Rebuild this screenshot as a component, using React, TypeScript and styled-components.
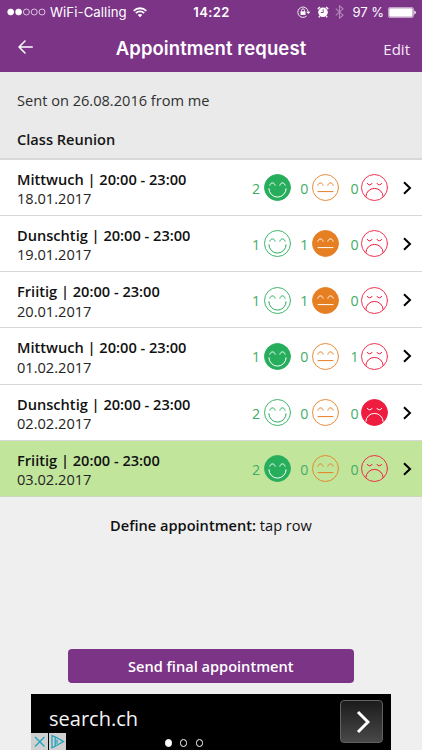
import React from "react";
import styled, { createGlobalStyle } from "styled-components";

const GlobalStyle = createGlobalStyle`
  * { box-sizing: border-box; }
  body { margin: 0; background: #efefef; }
`;

const purple = "#7c3487";
const green = "#27ae5c";
const orange = "#e67e22";
const red = "#ee1c3e";

const Screen = styled.div`
  width: 422px;
  height: 750px;
  display: flex;
  flex-direction: column;
  overflow: hidden;
  background: #efefef;
  color: #111;
  font: 15px/20px "Open Sans", "Noto Sans", sans-serif;
`;

const Header = styled.header`
  height: 72px;
  flex: none;
  background: ${purple};
  color: #fff;
  font-family: Inter, sans-serif;
`;

const StatusBar = styled.div`
  height: 24px;
  display: grid;
  grid-template-columns: 1fr auto 1fr;
  align-items: center;
  padding: 0 6px 0 7px;
  font-size: 13.2px;
  line-height: 24px;
`;

const StatusGroup = styled.div<{ $end?: boolean }>`
  display: flex;
  align-items: center;
  justify-content: ${(p) => (p.$end ? "flex-end" : "flex-start")};
  white-space: nowrap;
  svg { flex: none; }
`;

const Carrier = styled.span`
  margin: 0 6px 0 4px;
  letter-spacing: 0.08px;
`;

const Clock = styled.span`
  font-weight: 600;
  font-size: 13px;
  letter-spacing: 0.4px;
`;

const Percent = styled.span`
  margin: 0 4px 0 8px;
  font-size: 13px;
`;

const NavBar = styled.div`
  height: 48px;
  display: grid;
  grid-template-columns: 57px 1fr 63px;
  align-items: center;
  padding: 0 12px 2px 18px;
`;

const BackButton = styled.button`
  display: flex;
  padding: 0;
  border: 0;
  background: none;
`;

const Title = styled.h1`
  margin: 0;
  padding-top: 1px;
  text-align: center;
  font-size: 18.5px;
  line-height: 24px;
  font-weight: 600;
  letter-spacing: 0.08px;
  white-space: nowrap;
`;

const EditButton = styled.button`
  padding: 3px 0 0;
  border: 0;
  background: none;
  color: #f8e9fa;
  text-align: right;
  font: 15px/20px "Open Sans", sans-serif;
`;

const Info = styled.section`
  height: 87.6px;
  flex: none;
  padding: 18px 17px 0;
  background: #eaeaea;
  border-bottom: 2px solid #d9d9d9;
  font-size: 14.6px;
  color: #303030;
`;

const Subject = styled.h2`
  margin: 19px 0 0;
  font-size: 14.6px;
  line-height: 20px;
  font-weight: 600;
  color: #151515;
`;

const List = styled.div`
  flex: none;
`;

const Row = styled.div<{ $selected?: boolean }>`
  height: 56.25px;
  display: flex;
  align-items: center;
  padding: 1px 10px 0 17px;
  background: ${(p) => (p.$selected ? "#c2e59c" : "#fff")};
  border-bottom: 1px solid ${(p) => (p.$selected ? "#cbd8bd" : "#d8d8d8")};
`;

const When = styled.div`
  flex: 1;
  padding-top: 3px;
  font-size: 14.6px;
  line-height: 19.5px;
  white-space: nowrap;
`;

const Slot = styled.div`
  font-weight: 600;
`;

const DateText = styled.div`
  color: #242424;
`;

const Votes = styled.div`
  display: grid;
  grid-template-columns: 40px 47.5px 49.5px;
  margin-right: 15px;
`;

const Vote = styled.div`
  display: flex;
  align-items: center;
  justify-content: flex-end;
  svg { flex: none; }
`;

const Count = styled.span<{ $gap: number }>`
  margin-right: ${(p) => p.$gap}px;
  padding-top: 2px;
  color: #43ad67;
  font-size: 14.2px;
  line-height: 18px;
`;

const Hint = styled.p`
  margin: 18px 0 0;
  text-align: center;
  font-size: 14.6px;
  line-height: 20px;
`;

const HintLabel = styled.span`
  font-weight: 600;
`;

const SendButton = styled.button`
  width: 286.5px;
  height: 34px;
  flex: none;
  margin: auto 0 11px 67.5px;
  border: 0;
  border-radius: 4px;
  background: ${purple};
  color: #fff;
  font: 600 14.6px/34px "Open Sans", sans-serif;
  padding: 0;
`;

const Banner = styled.aside`
  position: relative;
  width: 360px;
  height: 56px;
  flex: none;
  margin-left: 31px;
  padding: 6px 8px 0 18px;
  display: flex;
  justify-content: space-between;
  background: #000;
  color: #f4f4f4;
`;

const BannerTitle = styled.div`
  padding-top: 5px;
  font-size: 20px;
  line-height: 28px;
`;

const BannerArrow = styled.button`
  width: 43px;
  height: 43px;
  padding: 0 0 0 2px;
  display: flex;
  align-items: center;
  justify-content: center;
  border: 1px solid #626262;
  border-radius: 4px;
  background: linear-gradient(#1c1c1c, #484848);
`;

const AdBadges = styled.div`
  position: absolute;
  left: 0;
  bottom: 0;
  display: flex;
  gap: 1px;
`;

const AdBadge = styled.span`
  width: 17px;
  height: 17px;
  background: #d0d0d0;
  svg { display: block; }
`;

const Pager = styled.div`
  position: absolute;
  left: 133.5px;
  bottom: 3.5px;
  display: flex;
  gap: 8.5px;
`;

const PageDot = styled.span<{ $active?: boolean }>`
  width: 7.2px;
  height: 7.2px;
  border-radius: 50%;
  border: 1.4px solid #fff;
  background: ${(p) => (p.$active ? "#fff" : "transparent")};
`;

type Mood = "happy" | "neutral" | "sad";
const moodColor: Record<Mood, string> = { happy: green, neutral: orange, sad: red };

function Face({ mood, filled }: { mood: Mood; filled: boolean }) {
  const color = moodColor[mood];
  return (
    <svg width="27" height="27" viewBox="0 0 27 27" fill="none" strokeLinecap="round">
      <circle cx="13.5" cy="13.5" r="13" fill={filled ? color : "none"} stroke={color} strokeWidth="0.9" />
      <g stroke={filled ? "#fff" : color} strokeWidth="1">
        {mood === "sad" ? (
          <path d="M6.4 9.4a2.4 2 0 0 0 4.6 0M16 9.4a2.4 2 0 0 0 4.6 0M4.9 22.4A8.6 8 0 0 1 22.1 22.4" />
        ) : (
          <path d="M5.9 11.2C6.6 8 10.4 8 11.1 11.2M15.9 11.2C16.6 8 20.4 8 21.1 11.2" />
        )}
        {mood === "happy" && <path d="M4.9 14.7A8.6 8.4 0 0 0 22.1 14.7" />}
        {mood === "neutral" && <path d="M6 17.6H21" />}
      </g>
    </svg>
  );
}

const Chevron = () => (
  <svg width="9" height="14" viewBox="0 0 9 14" fill="none" stroke="#000" strokeWidth="2">
    <path d="M1 1.3 7 7 1 12.7" />
  </svg>
);

interface Appointment {
  slot: string;
  date: string;
  counts: [number, number, number];
  mine: Mood;
  selected?: boolean;
}

const appointments: Appointment[] = [
  { slot: "Mittwuch | 20:00 - 23:00", date: "18.01.2017", counts: [2, 0, 0], mine: "happy" },
  { slot: "Dunschtig | 20:00 - 23:00", date: "19.01.2017", counts: [1, 1, 0], mine: "neutral" },
  { slot: "Friitig | 20:00 - 23:00", date: "20.01.2017", counts: [1, 1, 0], mine: "neutral" },
  { slot: "Mittwuch | 20:00 - 23:00", date: "01.02.2017", counts: [1, 0, 1], mine: "happy" },
  { slot: "Dunschtig | 20:00 - 23:00", date: "02.02.2017", counts: [2, 0, 0], mine: "sad" },
  { slot: "Friitig | 20:00 - 23:00", date: "03.02.2017", counts: [2, 0, 0], mine: "happy", selected: true },
];

const moods: Mood[] = ["happy", "neutral", "sad"];
const countGaps = [4, 3.2, 2.4];

const Signal = () => (
  <svg width="39" height="8" viewBox="0 0 39 8" fill="none" stroke="#fff" strokeWidth="0.7">
    <circle cx="3.7" cy="4" r="3" fill="#fff" />
    <circle cx="11.6" cy="4" r="3" fill="#fff" />
    <circle cx="19.4" cy="4" r="3" />
    <circle cx="27.2" cy="4" r="3" />
    <circle cx="35" cy="4" r="3" />
  </svg>
);

const Wifi = () => (
  <svg width="14" height="11" viewBox="0 0 14 11" fill="none" stroke="#fff" strokeWidth="1.8">
    <path d="M.7 3.8a9 9 0 0 1 12.6 0M2.9 6.1a5.8 5.8 0 0 1 8.2 0" />
    <path d="M4.8 8a3.1 3.1 0 0 1 4.4 0L7 10.3Z" fill="#fff" stroke="none" />
  </svg>
);

const RotationLock = () => (
  <svg width="14" height="12" viewBox="0 0 14 12" fill="none" stroke="#fff">
    <path d="M9.6 10A5.2 5.2 0 1 1 11.2 5.8" strokeWidth="0.9" />
    <path d="M9.2 5.7h4.2l-2.1 2.4Z" fill="#fff" stroke="none" />
    <rect x="3.5" y="5.3" width="5" height="3.6" fill="#fff" stroke="none" />
    <path d="M4.5 5.5V4.4a1.5 1.5 0 0 1 3 0v1.1" strokeWidth="0.9" />
  </svg>
);

const Alarm = () => (
  <svg width="12" height="12" viewBox="0 0 12 12" fill="none" stroke="#fff">
    <circle cx="6" cy="6.3" r="4.8" fill="#fff" stroke="none" />
    <path d="M.8 3 3 1M11.2 3 9 1M2.8 10.2l-1 1.1M9.2 10.2l1 1.1" strokeWidth="1.5" />
    <path d="M6.2 3.3v3.2H3.8" stroke={purple} strokeWidth="0.9" />
  </svg>
);

const Bluetooth = () => (
  <svg width="9" height="14" viewBox="0 0 9 14" fill="none" stroke="#b58abb" strokeWidth="1.1">
    <path d="M.8 3.7 8 10.2 4.5 13.2V.8L8 3.8.8 10.3" />
  </svg>
);

const Battery = () => (
  <svg width="28" height="11" viewBox="0 0 28 11" fill="#fff">
    <rect x="0.4" y="0.4" width="25" height="10.2" rx="1.8" fill="none" stroke="#fff" strokeWidth="0.6" />
    <rect x="1.2" y="1.2" width="23.4" height="8.6" rx="1" />
    <path d="M26.3 3.5q1.5.5 1.5 2t-1.5 2Z" />
  </svg>
);

const RotationSlot = styled.span`
  display: flex;
  margin-right: 6px;
`;

const BluetoothSlot = styled.span`
  display: flex;
  margin-left: 6px;
`;

export default function App() {
  return (
    <Screen>
      <GlobalStyle />
      <Header>
        <StatusBar>
          <StatusGroup>
            <Signal />
            <Carrier>WiFi-Calling</Carrier>
            <Wifi />
          </StatusGroup>
          <Clock>14:22</Clock>
          <StatusGroup $end>
            <RotationSlot><RotationLock /></RotationSlot>
            <Alarm />
            <BluetoothSlot><Bluetooth /></BluetoothSlot>
            <Percent>97 %</Percent>
            <Battery />
          </StatusGroup>
        </StatusBar>
        <NavBar>
          <BackButton aria-label="Back">
            <svg width="15" height="14" viewBox="0 0 15 14" fill="none" stroke="#fff" strokeWidth="1.5" strokeLinecap="round" strokeLinejoin="round">
              <path d="M14.3 7H1M7 1 1 7l6 6" />
            </svg>
          </BackButton>
          <Title>Appointment request</Title>
          <EditButton>Edit</EditButton>
        </NavBar>
      </Header>
      <Info>
        <div>Sent on 26.08.2016 from me</div>
        <Subject>Class Reunion</Subject>
      </Info>
      <List>
        {appointments.map((a) => (
          <Row key={a.date} $selected={a.selected}>
            <When>
              <Slot>{a.slot}</Slot>
              <DateText>{a.date}</DateText>
            </When>
            <Votes>
              {moods.map((mood, i) => (
                <Vote key={mood}>
                  <Count $gap={countGaps[i]}>{a.counts[i]}</Count>
                  <Face mood={mood} filled={a.mine === mood} />
                </Vote>
              ))}
            </Votes>
            <Chevron />
          </Row>
        ))}
      </List>
      <Hint>
        <HintLabel>Define appointment:</HintLabel> tap row
      </Hint>
      <SendButton>Send final appointment</SendButton>
      <Banner>
        <BannerTitle>search.ch</BannerTitle>
        <BannerArrow aria-label="Open">
          <svg width="14" height="24" viewBox="0 0 14 24" fill="none" stroke="#fff" strokeWidth="3">
            <path d="M2 2 12 12 2 22" />
          </svg>
        </BannerArrow>
        <AdBadges>
          <AdBadge>
            <svg width="17" height="17" viewBox="0 0 17 17" fill="none" stroke="#22a5bd" strokeWidth="1.4">
              <path d="m4 4 9.5 9.5M13.5 4 4 13.5" />
            </svg>
          </AdBadge>
          <AdBadge>
            <svg width="17" height="17" viewBox="0 0 17 17" fill="none" stroke="#22a5bd" strokeWidth="1.3">
              <path d="M6 3.8 3 2.4v12.4l3-1.4M6.2 3.8v9.4L14.5 8.6 6.2 3.8M8 6.8v4" />
            </svg>
          </AdBadge>
        </AdBadges>
        <Pager>
          <PageDot $active />
          <PageDot />
          <PageDot />
        </Pager>
      </Banner>
    </Screen>
  );
}
